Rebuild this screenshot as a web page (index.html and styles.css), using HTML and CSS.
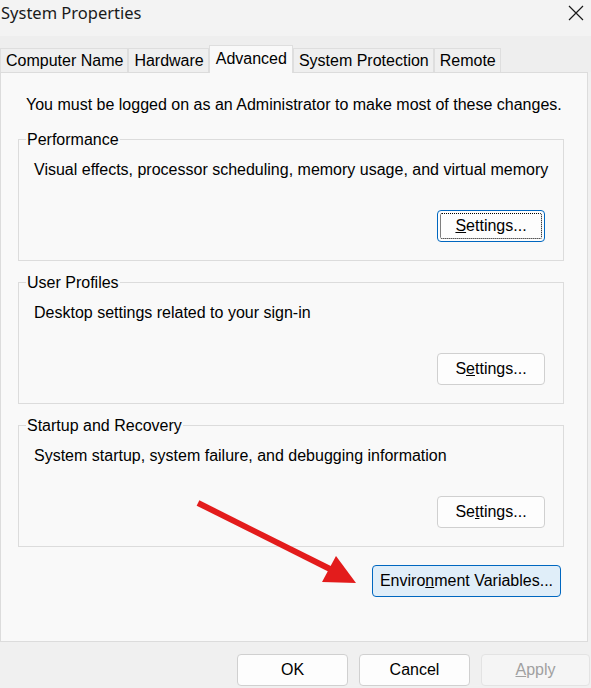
FILE: index.html
```html
<!DOCTYPE html>
<html lang="en">
<head>
	<meta charset="UTF-8">
	<title>System Properties</title>
	<link rel="stylesheet" href="styles.css">
</head>
<body>
	<div class="window">
		<div class="titlebar">
			<span class="title">System Properties</span>
			<svg class="close" width="16" height="16" viewBox="0 0 16 16">
				<path d="M1 1 L15 15 M15 1 L1 15" stroke="#1a1a1a" stroke-width="1.2" fill="none"/>
			</svg>
		</div>

		<div class="tabs">
			<div class="tab">Computer Name</div>
			<div class="tab">Hardware</div>
			<div class="tab active">Advanced</div>
			<div class="tab">System Protection</div>
			<div class="tab">Remote</div>
		</div>

		<div class="page">
			<p class="note">You must be logged on as an Administrator to make most of these changes.</p>

			<fieldset class="group">
				<legend>Performance</legend>
				<p class="desc">Visual effects, processor scheduling, memory usage, and virtual memory</p>
				<div class="row">
					<button class="btn focused"><span class="focus-ring"><u>S</u>ettings...</span></button>
				</div>
			</fieldset>

			<fieldset class="group">
				<legend>User Profiles</legend>
				<p class="desc">Desktop settings related to your sign-in</p>
				<div class="row">
					<button class="btn">S<u>e</u>ttings...</button>
				</div>
			</fieldset>

			<fieldset class="group">
				<legend>Startup and Recovery</legend>
				<p class="desc">System startup, system failure, and debugging information</p>
				<div class="row">
					<button class="btn">Se<u>t</u>tings...</button>
				</div>
			</fieldset>

			<div class="row env-row">
				<button class="btn default">Enviro<u>n</u>ment Variables...</button>
			</div>
		</div>

		<div class="footer">
			<button class="btn wide">OK</button>
			<button class="btn wide">Cancel</button>
			<button class="btn wide disabled"><u>A</u>pply</button>
		</div>

		<!-- red pointer drawn on top of the dialog -->
		<svg class="pointer" width="591" height="688" viewBox="0 0 591 688">
			<line x1="198" y1="503" x2="332" y2="570" stroke="#e31c1c" stroke-width="6"/>
			<polygon points="356,583 336,556 322,582" fill="#e31c1c"/>
		</svg>
	</div>
</body>
</html>
```

FILE: styles.css
```css
*{
	margin: 0;
	padding: 0;
	box-sizing: border-box;
}
body{
	background: #f0f0f0;
	font-family: "Liberation Sans", Arial, sans-serif;
	font-size: 16px;
	color: #000;
}
.window{
	position: relative;
	width: 591px;
	height: 688px;
	overflow: hidden;
	background: #f0f0f0;
}

/* title bar */
.titlebar{
	height: 36px;
	background: #f3f3f3;
	display: flex;
	justify-content: space-between;
	align-items: flex-start;
	padding: 0 7px 0 1px;
}
.title{
	font-family: "Noto Sans", "Open Sans", sans-serif;
	font-size: 16.5px;
	line-height: 26px;
	color: #1a1a1a;
}
.close{
	margin-top: 5px;
}

/* tab strip */
.tabs{
	height: 36px;
	display: flex;
	align-items: flex-end;
	background: #eeeeee;
}
.tab{
	height: 24px;
	line-height: 23px;
	padding: 0 4px 0 5px;
	border: 1px solid #dedede;
	border-bottom: none;
	background: #efefef;
	white-space: nowrap;
}
.tab.active{
	position: relative;
	z-index: 1;
	height: 28px;
	margin-bottom: -1px;
	line-height: 25px;
	padding: 0 5px 0 6px;
	background: #f9f9f9;
}

/* tab page */
.page{
	width: 588px;
	height: 570px;
	background: #f9f9f9;
	border: 1px solid #dcdcdc;
	padding-top: 23px;
}
.note{
	line-height: 18px;
	padding-left: 25px;
}
.group{
	width: 546px;
	min-width: 0;
	margin: 15px 0 0 17px;
	border: 1px solid #dcdcdc;
	padding: 0 18px 18px 15px;
}
.group + .group{
	margin-top: 11px;
}
.group legend{
	margin-left: -8px;
	padding: 2px 1px 0;
	line-height: 18px;
}
.desc{
	margin-top: 12px;
	line-height: 18px;
	white-space: nowrap;
}
.row{
	display: flex;
	justify-content: flex-end;
	margin-top: 31px;
}

/* buttons */
.btn{
	font-family: "Liberation Sans", Arial, sans-serif;
	font-size: 16px;
	color: #000;
	height: 32px;
	width: 108px;
	background: #fdfdfd;
	border: 1px solid #d0d0d0;
	border-radius: 4px;
}
.btn.focused{
	border: 1px solid #0067c0;
	padding: 2px;
}
.focus-ring{
	display: flex;
	align-items: center;
	justify-content: center;
	height: 100%;
	border: 1px dotted #000;
	border-radius: 2px;
}
.env-row{
	margin-top: 18px;
	padding-right: 26px;
}
.btn.default{
	width: 189px;
	background: #e0eef9;
	border-color: #0067c0;
}

/* bottom bar */
.footer{
	display: flex;
	justify-content: flex-end;
	gap: 11px;
	padding: 12px 1px 0 0;
}
.btn.wide{
	width: 111px;
}
.btn.disabled{
	width: 109px;
	color: #a0a0a0;
	background: #f5f5f5;
	border-color: #e3e3e3;
}

.pointer{
	position: absolute;
	top: 0;
	left: 0;
	pointer-events: none;
}
```
